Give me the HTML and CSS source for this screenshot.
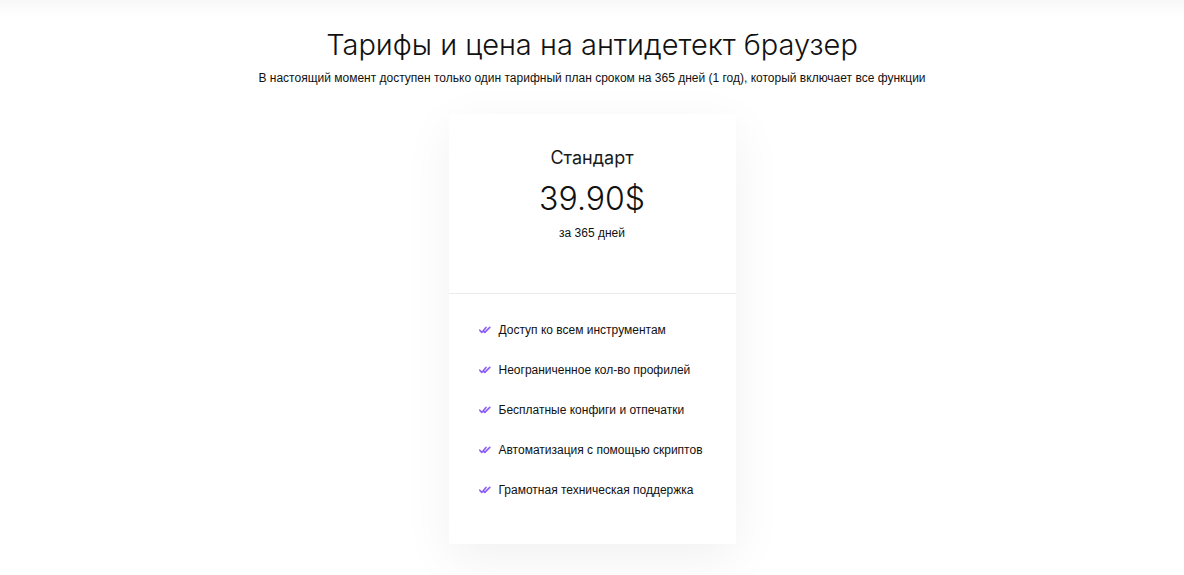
FILE: index.html
```html
<!DOCTYPE html>
<html lang="ru">
<head>
<meta charset="utf-8">
<title>Тарифы</title>
<link rel="stylesheet" href="styles.css">
</head>
<body>
<div class="topshade"></div>
<main class="pricing">
  <h1 class="title">Тарифы и цена на антидетект браузер</h1>
  <p class="subtitle">В настоящий момент доступен только один тарифный план сроком на 365 дней (1 год), который включает все функции</p>
  <div class="card">
    <div class="card-head">
      <div class="plan">Стандарт</div>
      <div class="price">39.90$</div>
      <div class="period">за 365 дней</div>
    </div>
    <ul class="features">
      <li><svg class="check" viewBox="0 0 12 8" width="12" height="8"><path d="M0.8 4.2 L2.8 6.4 L7 1.4 M5 5.6 L5.8 6.4 L10.8 1.4" fill="none" stroke="#8a5cf5" stroke-width="1.6" stroke-linecap="round" stroke-linejoin="round"/></svg>Доступ ко всем инструментам</li>
      <li><svg class="check" viewBox="0 0 12 8" width="12" height="8"><path d="M0.8 4.2 L2.8 6.4 L7 1.4 M5 5.6 L5.8 6.4 L10.8 1.4" fill="none" stroke="#8a5cf5" stroke-width="1.6" stroke-linecap="round" stroke-linejoin="round"/></svg>Неограниченное кол-во профилей</li>
      <li><svg class="check" viewBox="0 0 12 8" width="12" height="8"><path d="M0.8 4.2 L2.8 6.4 L7 1.4 M5 5.6 L5.8 6.4 L10.8 1.4" fill="none" stroke="#8a5cf5" stroke-width="1.6" stroke-linecap="round" stroke-linejoin="round"/></svg>Бесплатные конфиги и отпечатки</li>
      <li><svg class="check" viewBox="0 0 12 8" width="12" height="8"><path d="M0.8 4.2 L2.8 6.4 L7 1.4 M5 5.6 L5.8 6.4 L10.8 1.4" fill="none" stroke="#8a5cf5" stroke-width="1.6" stroke-linecap="round" stroke-linejoin="round"/></svg>Автоматизация с помощью скриптов</li>
      <li><svg class="check" viewBox="0 0 12 8" width="12" height="8"><path d="M0.8 4.2 L2.8 6.4 L7 1.4 M5 5.6 L5.8 6.4 L10.8 1.4" fill="none" stroke="#8a5cf5" stroke-width="1.6" stroke-linecap="round" stroke-linejoin="round"/></svg>Грамотная техническая поддержка</li>
    </ul>
  </div>
</main>
</body>
</html>
```

FILE: styles.css
```css
* { box-sizing: border-box; }
html, body { margin: 0; padding: 0; }
body {
  background: #ffffff;
  color: #1a1a1a;
  font-family: "Liberation Sans", Arial, sans-serif;
}
.topshade {
  height: 16px;
  background: linear-gradient(to bottom, #f7f7f7, #ffffff);
}
.pricing {
  display: flex;
  flex-direction: column;
  align-items: center;
  padding: 11px 0 30px;
}
.title {
  margin: 0;
  font-family: Inter, sans-serif;
  font-weight: 300;
  font-size: 29px;
  line-height: 36px;
  color: #111;
}
.subtitle {
  margin: 7px 0 0;
  font-size: 12px;
  line-height: 16px;
  color: #111;
}
.card {
  margin-top: 28px;
  width: 287px;
  background: #fff;
  box-shadow: 0 14px 48px rgba(0,0,0,0.06);
}
.card-head {
  display: flex;
  flex-direction: column;
  align-items: center;
  height: 180px;
  padding-top: 32px;
  border-bottom: 1px solid #ececec;
}
.plan {
  font-family: Inter, sans-serif;
  font-size: 18px;
  line-height: 24px;
  font-weight: 400;
  color: #1a1a1a;
}
.price {
  margin-top: 11px;
  font-family: Inter, sans-serif;
  font-size: 32px;
  font-weight: 300;
  line-height: 36px;
  color: #111;
}
.period {
  margin-top: 8px;
  font-size: 12px;
  line-height: 16px;
  color: #111;
}
.features {
  list-style: none;
  margin: 0;
  padding: 28px 0 46px 30px;
}
.features li {
  display: flex;
  align-items: center;
  height: 16px;
  font-size: 12px;
  line-height: 16px;
  color: #111;
}
.features li + li { margin-top: 24px; }
.check {
  margin-right: 8px;
  flex: none;
}
```
